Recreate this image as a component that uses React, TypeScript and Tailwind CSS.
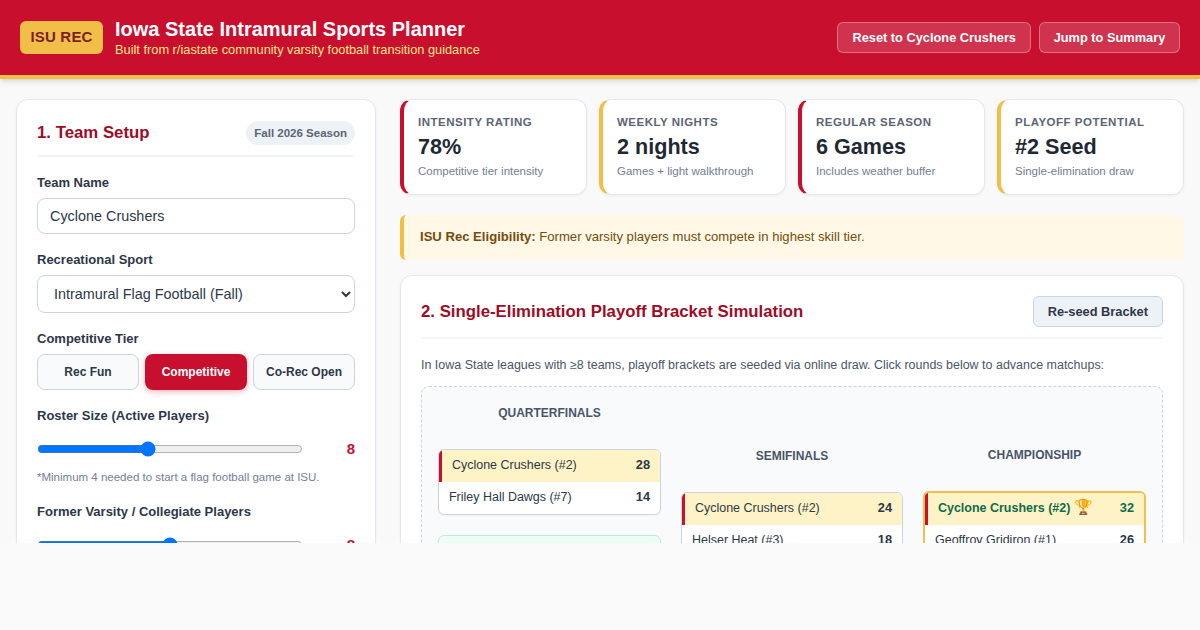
const statCards = [
  { label: 'Intensity Rating', value: '78%', note: 'Competitive tier intensity', accent: 'border-l-[#c8102e]' },
  { label: 'Weekly Nights', value: '2 nights', note: 'Games + light walkthrough', accent: 'border-l-[#f1be48]' },
  { label: 'Regular Season', value: '6 Games', note: 'Includes weather buffer', accent: 'border-l-[#c8102e]' },
  { label: 'Playoff Potential', value: '#2 Seed', note: 'Single-elimination draw', accent: 'border-l-[#f1be48]' },
]

function Label({ children }: { children: React.ReactNode }) {
  return <label className="mb-2 block text-[13px] leading-[15px] font-bold text-[#2d3748]">{children}</label>
}

function Row({ name, score, winner }: { name: string; score: number; winner?: boolean }) {
  return (
    <div
      className={`flex h-8 items-center justify-between pr-2.5 pb-[2px] text-[12.48px] text-[#2d3748] ${
        winner ? 'border-l-[3px] border-l-[#c8102e] bg-[#fef3c7] pl-2.5' : 'pl-2.5'
      }`}
    >
      <span>{name}</span>
      <span className="text-[12.8px] font-bold">{score}</span>
    </div>
  )
}

function Match({ children, green }: { children: React.ReactNode; green?: boolean }) {
  return (
    <div
      className={`overflow-hidden rounded-md border shadow-[0_1px_2px_rgba(0,0,0,0.04)] ${
        green ? 'border-[#c6e9d8] bg-[#ecfdf5]' : 'border-[#cbd5e1] bg-white'
      }`}
    >
      {children}
    </div>
  )
}

function RoundTitle({ children }: { children: React.ReactNode }) {
  return <h3 className="mb-[26px] h-5 text-center text-xs leading-5 font-bold text-[#4a5568]">{children}</h3>
}

export default function App() {
  return (
    <div className="h-[630px] overflow-hidden bg-[#fafafa] font-['Liberation_Sans',Arial,sans-serif]">
      <div className="h-[543px] overflow-hidden bg-[#f9f9fa]">
        <header className="flex h-[79px] items-center justify-between border-b-4 border-[#f1be48] bg-[#c8102e] px-5 shadow-md">
          <div className="flex items-center gap-3">
            <div className="flex h-[33px] w-[83px] items-center justify-center rounded-md bg-[#f1be48] text-[15px] font-bold tracking-[0.2px] text-[#7c1f2c]">
              ISU REC
            </div>
            <div className="pb-[2px]">
              <h1 className="text-[20px] leading-[26px] font-bold text-white">Iowa State Intramural Sports Planner</h1>
              <p className="text-[12.8px] leading-[15px] text-[#fde68a]">Built from r/iastate community varsity football transition guidance</p>
            </div>
          </div>
          <div className="flex gap-2">
            <button className="h-[31px] rounded-md border border-white/30 bg-white/15 px-3.5 text-[12.8px] font-bold text-white">
              Reset to Cyclone Crushers
            </button>
            <button className="h-[31px] w-[141px] rounded-md border border-white/30 bg-white/15 text-[12.8px] font-bold text-white">
              Jump to Summary
            </button>
          </div>
        </header>

        <main className="flex items-start gap-6 px-4 pt-5">
          <section className="h-[600px] w-[360px] shrink-0 rounded-xl border border-[#e2e8f0] bg-white px-5 pt-[21px] shadow-[0_1px_3px_rgba(0,0,0,0.05)]">
            <div className="mb-[18px] flex h-[36px] items-start justify-between border-b-2 border-[#f1f5f9]">
              <h2 className="mt-[2px] text-[16.8px] leading-5 font-bold text-[#9e0b26]">1. Team Setup</h2>
              <span className="rounded-xl bg-[#edf2f7] px-2 py-[5px] text-[11.5px] leading-[14px] font-bold text-[#5b6575]">Fall 2026 Season</span>
            </div>

            <Label>Team Name</Label>
            <input
              defaultValue="Cyclone Crushers"
              className="mb-[18px] block h-9 w-full rounded-lg border border-[#cbd5e1] px-3 text-[14.4px] text-[#2d3748]"
            />

            <Label>Recreational Sport</Label>
            <select className="mb-[18px] block h-[38px] w-full rounded-lg border border-[#cbd5e1] bg-white px-3 text-[14.4px] text-[#2d3748]">
              <option>Intramural Flag Football (Fall)</option>
            </select>

            <Label>Competitive Tier</Label>
            <div className="mb-[18px] grid grid-cols-3 gap-1.5">
              <button className="h-9 rounded-lg border border-[#cbd5e1] bg-[#f8fafc] text-xs font-bold text-[#2d3748]">Rec Fun</button>
              <button className="h-9 rounded-lg bg-[#c8102e] text-xs font-bold text-white shadow-[0_2px_6px_rgba(200,16,46,0.3)]">Competitive</button>
              <button className="h-9 rounded-lg border border-[#cbd5e1] bg-[#f8fafc] text-xs font-bold text-[#2d3748]">Co-Rec Open</button>
            </div>

            <Label>Roster Size (Active Players)</Label>
            <div className="mt-[18px] mb-[13px] flex h-4 items-center justify-between">
              <input type="range" min={1} max={18} defaultValue={8} className="m-0 h-4 w-[266px]" />
              <span className="text-[15px] font-bold text-[#c8102e]">8</span>
            </div>
            <p className="mb-[20px] text-[11.5px] leading-[14px] text-[#718096]">*Minimum 4 needed to start a flag football game at ISU.</p>

            <Label>Former Varsity / Collegiate Players</Label>
            <div className="mt-[18px] flex h-4 items-center justify-between">
              <input type="range" min={0} max={16} defaultValue={8} className="m-0 h-4 w-[266px]" />
              <span className="text-[15px] font-bold text-[#c8102e]">8</span>
            </div>
          </section>

          <div className="min-w-0 flex-1">
            <div className="mb-5 grid grid-cols-4 gap-3">
              {statCards.map((card) => (
                <div key={card.label} className={`h-24 rounded-xl border border-l-4 border-[#e2e8f0] bg-white px-3.5 pt-[15px] shadow-[0_1px_3px_rgba(0,0,0,0.05)] ${card.accent}`}>
                  <div className="text-[11.5px] leading-[14px] font-bold tracking-[0.5px] text-[#5b6575] uppercase">{card.label}</div>
                  <div className="mt-[3px] text-[21.6px] leading-[30px] font-bold text-[#1f2933]">{card.value}</div>
                  <div className="mt-[2px] text-[11.5px] leading-[14px] text-[#718096]">{card.note}</div>
                </div>
              ))}
            </div>

            <div className="mb-[15px] flex h-[45px] items-center rounded-md border-l-4 border-[#f1be48] bg-[#fff8e6] pb-[2px] pl-4 text-[13.1px] text-[#744d0b]">
              <span>
                <strong>ISU Rec Eligibility:</strong> Former varsity players must compete in highest skill tier.
              </span>
            </div>

            <section className="h-[600px] rounded-xl border border-[#e2e8f0] bg-white px-5 pt-5 shadow-[0_1px_3px_rgba(0,0,0,0.05)]">
              <div className="mb-[18px] flex h-[43px] items-start justify-between border-b-2 border-[#f1f5f9]">
                <h2 className="mt-[6px] text-[16.8px] leading-5 font-bold text-[#9e0b26]">2. Single-Elimination Playoff Bracket Simulation</h2>
                <button className="h-[31px] rounded-md border border-[#cbd5e1] bg-[#edf2f7] px-3.5 text-[12.8px] font-bold text-[#2d3748]">Re-seed Bracket</button>
              </div>
              <p className="mb-[13px] text-[12.48px] leading-4 text-[#4a5568]">
                In Iowa State leagues with ≥8 teams, playoff brackets are seeded via online draw. Click rounds below to advance matchups:
              </p>

              <div className="grid grid-cols-[223px_222px_223px] gap-5 rounded-lg border border-dashed border-[#cbd5e1] bg-[#f8fafc] p-4">
                <div className="flex flex-col justify-center">
                  <RoundTitle>QUARTERFINALS</RoundTitle>
                  <div className="flex flex-col gap-5">
                    <Match>
                      <Row name="Cyclone Crushers (#2)" score={28} winner />
                      <Row name="Friley Hall Dawgs (#7)" score={14} />
                    </Match>
                    <Match green>
                      <Row name="Helser Heat (#3)" score={21} />
                      <Row name="Maple Willow Larch (#6)" score={17} />
                    </Match>
                  </div>
                </div>

                <div className="flex flex-col justify-center">
                  <RoundTitle>SEMIFINALS</RoundTitle>
                  <Match>
                    <Row name="Cyclone Crushers (#2)" score={24} winner />
                    <Row name="Helser Heat (#3)" score={18} />
                  </Match>
                </div>

                <div className="flex flex-col justify-center">
                  <RoundTitle>CHAMPIONSHIP</RoundTitle>
                  <div className="overflow-hidden rounded-md border-2 border-[#f1be48] bg-white">
                    <div className="flex h-8 items-center justify-between border-l-[3px] border-l-[#c8102e] bg-[#fef3c7] pr-2.5 pb-[2px] pl-2.5 text-[12.48px] font-bold text-[#0f6b4a]">
                      <span>
                        Cyclone Crushers (#2) <span className="text-[15px] leading-none">🏆</span>
                      </span>
                      <span className="text-[12.8px]">32</span>
                    </div>
                    <Row name="Geoffroy Gridiron (#1)" score={26} />
                  </div>
                </div>
              </div>
            </section>
          </div>
        </main>
      </div>
    </div>
  )
}
